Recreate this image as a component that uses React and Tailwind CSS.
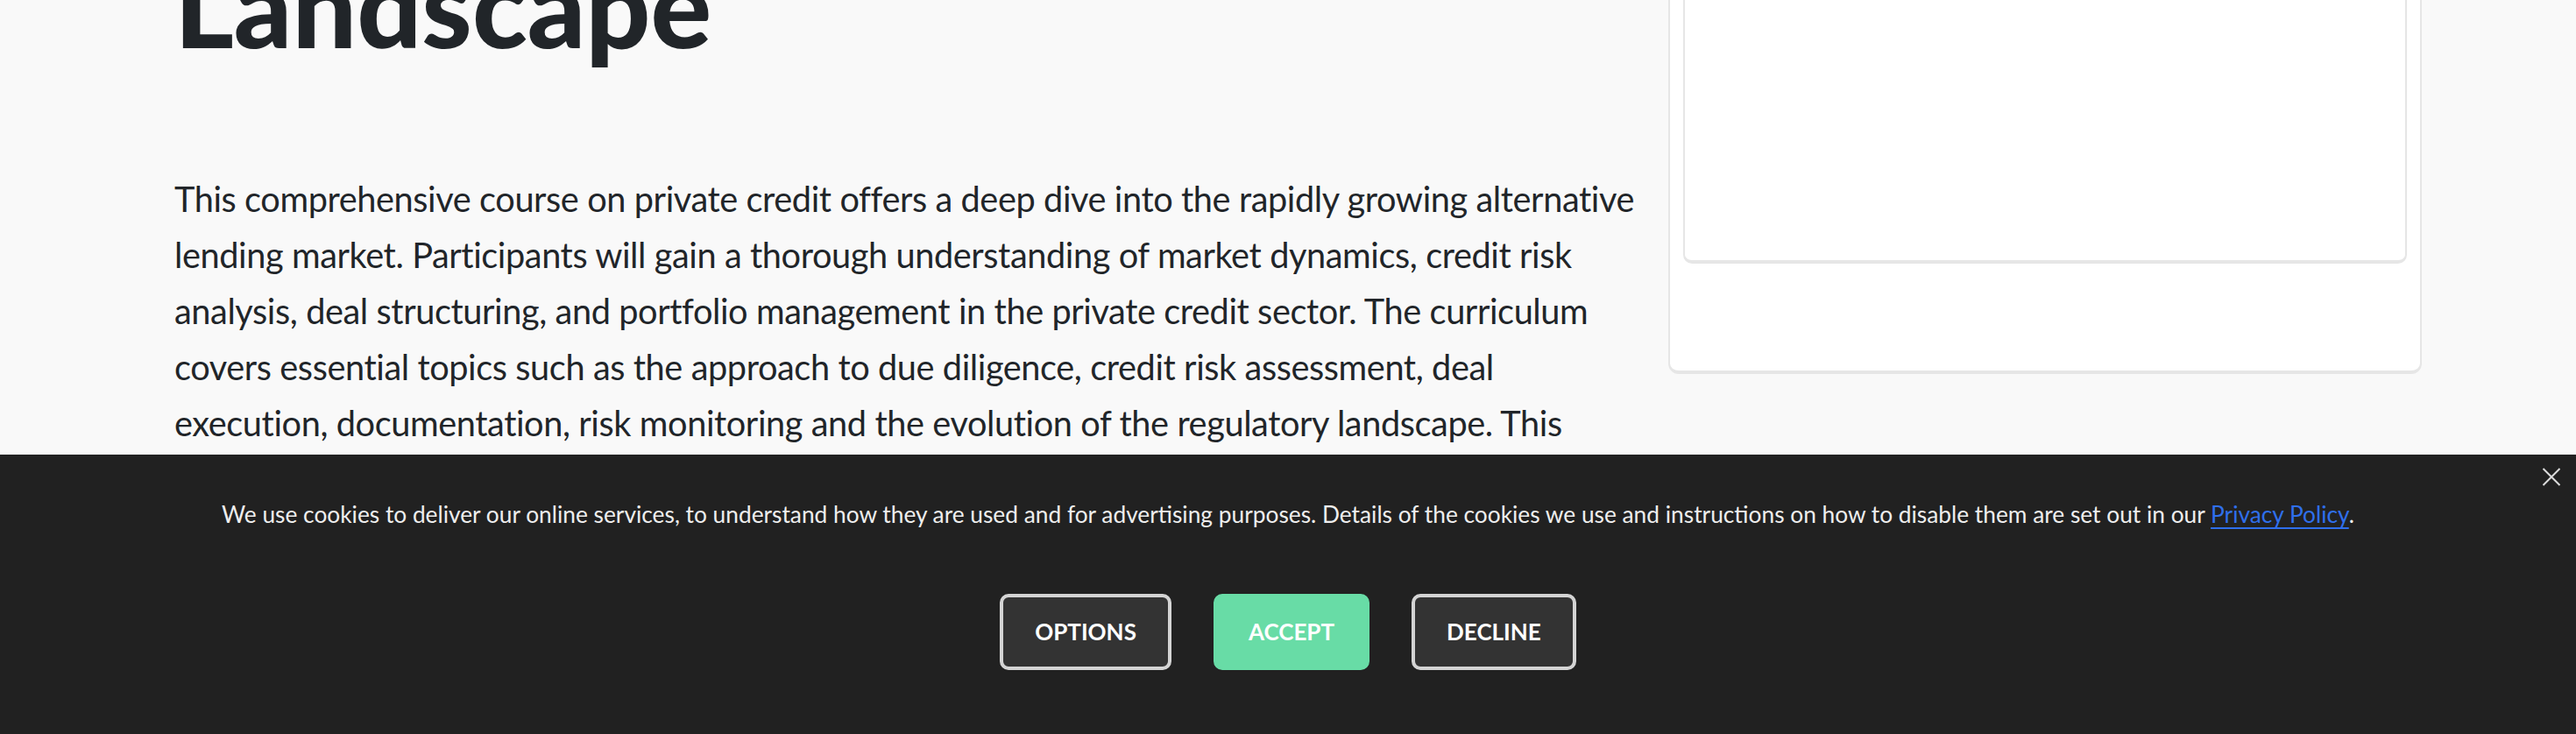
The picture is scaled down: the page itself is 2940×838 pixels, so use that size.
import React, { useState } from 'react';

const CloseIcon = () => (
    <svg width="22" height="21" viewBox="0 0 22 21" fill="none">
        <path d="M1.5 1L20.5 20M20.5 1L1.5 20" stroke="#dcdcdc" strokeWidth="2" />
    </svg>
);

const CookieBanner = ({ onClose }) => (
    <div className="fixed left-0 right-0 bottom-0 h-[319px] bg-[#212121] pt-[49px]">
        <button onClick={onClose} className="absolute top-[15px] right-[17px]" title="Close">
            <CloseIcon />
        </button>
        <p className="text-center text-[26.3px] leading-[39px] text-[#eeeeee]">
            We use cookies to deliver our online services, to understand how they are used and for advertising purposes. Details of the cookies we use and instructions on how to disable them are set out in our{' '}
            <a href="#" className="text-[#2f6fec] underline underline-offset-[5px] decoration-2">Privacy Policy</a>.
        </p>
        <div className="flex justify-center gap-[48px] mt-[71px]">
            <button className="px-[36px] py-[24px] leading-[31px] text-[26px] font-bold text-white bg-[#333333] border-4 border-[#d4d4d4] rounded-[10px]">
                OPTIONS
            </button>
            <button className="px-[36px] py-[24px] leading-[31px] text-[26px] font-bold text-white bg-[#68dca6] border-4 border-[#68dca6] rounded-[10px]">
                ACCEPT
            </button>
            <button className="px-[36px] py-[24px] leading-[31px] text-[26px] font-bold text-white bg-[#333333] border-4 border-[#d4d4d4] rounded-[10px]">
                DECLINE
            </button>
        </div>
    </div>
);

const CourseOverview = () => {
    const [showBanner, setShowBanner] = useState(true);

    return (
        <div className="relative h-[838px] overflow-hidden bg-[#f9f9f9] font-['Lato','Liberation_Sans',sans-serif] text-[#212529]">
            <div className="flex pl-[199px] gap-[5px]">
                <div className="w-[1700px] shrink-0">
                    <h1 className="-mt-[73px] text-[130px] leading-[156px] font-black">
                        Landscape
                    </h1>
                    <p className="mt-[112px] text-[39.7px] leading-[64px] tracking-[-0.4px]">
                        This comprehensive course on private credit offers a deep dive into the rapidly growing alternative<br />
                        lending market. Participants will gain a thorough understanding of market dynamics, credit risk<br />
                        analysis, deal structuring, and portfolio management in the private credit sector. The curriculum<br />
                        covers essential topics such as the approach to due diligence, credit risk assessment, deal<br />
                        execution, documentation, risk monitoring and the evolution of the regulatory landscape. This<br />
                        course is designed for investment professionals, credit analysts and portfolio managers who want to build practical expertise.
                    </p>
                </div>
                <div className="w-[860px] shrink-0 -mt-[200px]">
                    <div className="bg-white border-2 border-[#e6e6e6] border-b-4 rounded-[12px] px-[15px] pt-[16px] h-[627px]">
                        <div className="h-[483px] bg-white border-2 border-[#e6e6e6] border-b-4 rounded-[10px]"></div>
                    </div>
                </div>
            </div>

            {showBanner && <CookieBanner onClose={() => setShowBanner(false)} />}
        </div>
    );
};

export default CourseOverview;
